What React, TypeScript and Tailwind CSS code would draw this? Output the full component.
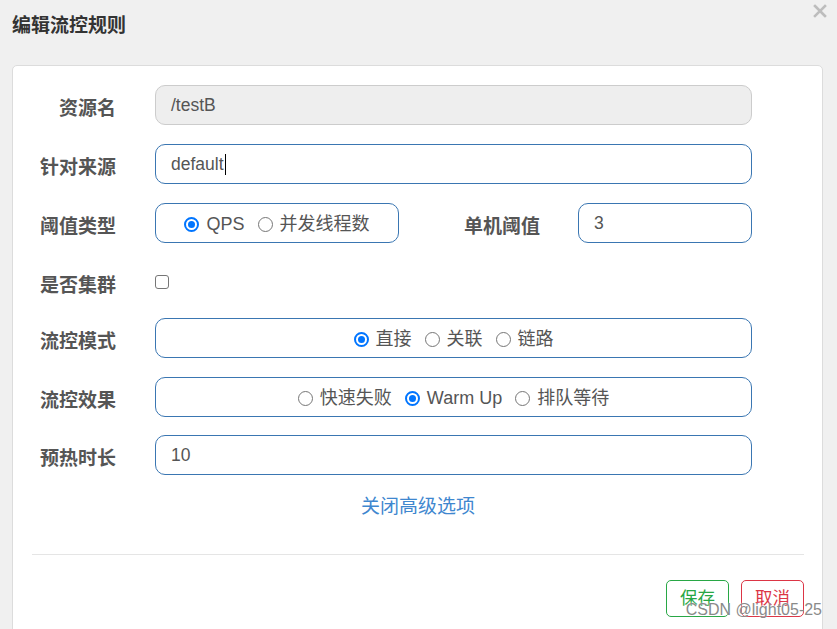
import React from "react"

const Radio = ({ checked, label }: { checked?: boolean; label: string }) => (
  <span className="flex items-center gap-[7px]">
    {checked ? (
      <span className="w-[15px] h-[15px] rounded-full border-[2px] border-[#0075ff] bg-white flex items-center justify-center">
        <span className="w-[7px] h-[7px] rounded-full bg-[#0075ff]" />
      </span>
    ) : (
      <span className="w-[15px] h-[15px] rounded-full border border-[#767676] bg-white" />
    )}
    <span>{label}</span>
  </span>
)

const RadioGroup = ({ options, value, width }: { options: string[]; value: string; width: string }) => (
  <div className={`${width} h-[40px] rounded-[10px] border border-[#3a76b2] flex items-center justify-center gap-[13px] text-[18px] text-[#555] pt-[2px]`}>
    {options.map((o) => (
      <Radio key={o} label={o} checked={o === value} />
    ))}
  </div>
)

const Label = ({ children }: { children: React.ReactNode }) => (
  <div className="w-[84px] shrink-0 text-right text-[19px] font-bold text-[#555] leading-[24px] mt-[3px] font-['Noto_Sans_CJK_SC',sans-serif]">
    {children}
  </div>
)

const App = () => {
  return (
    <div className="w-[837px] h-[629px] bg-[#f0f0f0] overflow-hidden relative font-['Liberation_Sans','Noto_Sans_CJK_SC',sans-serif]">
      {/* Header */}
      <div className="h-[65px] px-[12px] pt-[13px]">
        <h3 className="text-[19px] font-bold text-[#333] leading-[22px] font-['Noto_Sans_CJK_SC',sans-serif]">编辑流控规则</h3>
      </div>
      <button className="absolute right-[10px] top-[4px] w-[14px] h-[14px]">
        <svg viewBox="0 0 14 14" className="w-[14px] h-[14px]">
          <path d="M2 2 L12 12 M12 2 L2 12" stroke="#bdbdbd" strokeWidth="2.6" strokeLinecap="square" />
        </svg>
      </button>

      {/* Card */}
      <div className="ml-[12px] w-[811px] h-[600px] bg-white border border-[#dcdcdc] rounded-[5px] pt-[19px] pl-[19px]">
        <div className="flex items-center h-[40px] mb-[19px] gap-[39px]">
          <Label>资源名</Label>
          <div className="w-[597px] h-[40px] rounded-[10px] border border-[#cccccc] bg-[#eeeeee] flex items-center px-[15px] text-[17.5px] text-[#555]">
            /testB
          </div>
        </div>

        <div className="flex items-center h-[40px] mb-[19px] gap-[39px]">
          <Label>针对来源</Label>
          <div className="w-[597px] h-[40px] rounded-[10px] border border-[#3a76b2] flex items-center px-[15px] text-[17.5px] text-[#555]">
            default
            <span className="w-[1px] h-[21px] bg-black ml-[1px]" />
          </div>
        </div>

        <div className="flex items-center h-[40px] mb-[19px] gap-[39px]">
          <Label>阈值类型</Label>
          <RadioGroup width="w-[244px]" options={["QPS", "并发线程数"]} value="QPS" />
          <div className="flex items-center gap-[38px] ml-[18px]">
            <Label>单机阈值</Label>
            <div className="w-[174px] h-[40px] rounded-[10px] border border-[#3a76b2] flex items-center px-[15px] text-[17.5px] text-[#555]">
              3
            </div>
          </div>
        </div>

        <div className="flex items-center h-[40px] mb-[16px] gap-[39px]">
          <Label>是否集群</Label>
          <span className="w-[14px] h-[14px] rounded-[3px] border border-[#767676] bg-white" />
        </div>

        <div className="flex items-center h-[40px] mb-[19px] gap-[39px]">
          <Label>流控模式</Label>
          <RadioGroup width="w-[597px]" options={["直接", "关联", "链路"]} value="直接" />
        </div>

        <div className="flex items-center h-[40px] mb-[18px] gap-[39px]">
          <Label>流控效果</Label>
          <RadioGroup width="w-[597px]" options={["快速失败", "Warm Up", "排队等待"]} value="Warm Up" />
        </div>

        <div className="flex items-center h-[40px] gap-[39px]">
          <Label>预热时长</Label>
          <div className="w-[597px] h-[40px] rounded-[10px] border border-[#3a76b2] flex items-center px-[15px] text-[17.5px] text-[#555]">
            10
          </div>
        </div>

        <div className="w-[772px] mt-[22px] text-center text-[19px] leading-[20px] text-[#3f87cf]">
          关闭高级选项
        </div>

        <div className="w-[772px] h-[1px] bg-[#e5e5e5] mt-[37px]" />

        <div className="w-[772px] flex justify-end gap-[12px] mt-[25px]">
          <button className="w-[63px] h-[37px] rounded-[5px] border border-[#28a745] text-[#28a745] text-[17.5px]">保存</button>
          <button className="w-[63px] h-[37px] rounded-[5px] border border-[#dc3545] text-[#dc3545] text-[17.5px]">取消</button>
        </div>
      </div>

      {/* Watermark */}
      <div className="absolute right-[15px] top-[599px] text-[16px] leading-[22px] text-[#8a8a8a] [text-shadow:0_0_2px_#fff]">
        CSDN @light05-25
      </div>
    </div>
  )
}

export default App
